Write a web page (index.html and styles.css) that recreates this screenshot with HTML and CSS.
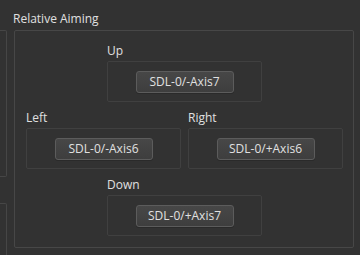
FILE: index.html
```html
<!DOCTYPE html>
<html lang="en">

<head>
    <meta charset="UTF-8">
    <title>Relative Aiming</title>
    <link rel="stylesheet" href="styles.css">
</head>

<body>
    <div class="page">
        <div class="side">
            <div class="side-box first"></div>
            <div class="side-box second"></div>
        </div>
        <div class="main">
            <div class="group-title">Relative Aiming</div>
            <div class="group">
                <div class="cell up">
                    <div class="label">Up</div>
                    <div class="box"><button class="bind">SDL-0/-Axis7</button></div>
                </div>
                <div class="cell">
                    <div class="label">Left</div>
                    <div class="box"><button class="bind">SDL-0/-Axis6</button></div>
                </div>
                <div class="cell">
                    <div class="label">Right</div>
                    <div class="box"><button class="bind">SDL-0/+Axis6</button></div>
                </div>
                <div class="cell down">
                    <div class="label">Down</div>
                    <div class="box"><button class="bind">SDL-0/+Axis7</button></div>
                </div>
            </div>
        </div>
    </div>
</body>

</html>
```

FILE: styles.css
```css
* {
    margin: 0;
    padding: 0;
    box-sizing: border-box;
}
html, body {
    height: 100%;
    overflow: hidden;
}
body {
    background: #323232;
    color: #e0e0e0;
    font: 12px/16px "Open Sans", "Noto Sans", sans-serif;
}
.page {
    display: flex;
    gap: 6px;
    height: 100%;
}
.side {
    width: 7px;
    height: 100%;
    overflow: hidden;
    display: flex;
    flex-direction: column;
    padding-top: 30px;
}
.side-box {
    flex-shrink: 0;
    border: 1px solid #464646;
    border-left: none;
    border-radius: 0 2px 2px 0;
}
.side-box.first {
    height: 147px;
}
.side-box.second {
    margin-top: 26px;
    height: 80px;
}
.main {
    width: 341px;
    padding-top: 11px;
}
.group-title {
    height: 16px;
    margin-bottom: 3px;
}
.group {
    margin-left: 1px;
    height: 218px;
    border: 1px solid #474747;
    border-radius: 2px;
    padding: 12px 11px 11px;
    display: grid;
    grid-template-columns: 155px 155px;
    column-gap: 7px;
    row-gap: 8px;
}
.cell.up,
.cell.down {
    grid-column: 1 / 3;
    justify-self: center;
    width: 155px;
}
.label {
    height: 16px;
    margin-bottom: 2px;
}
.box {
    height: 41px;
    border: 1px solid #404040;
    border-radius: 2px;
    display: flex;
    align-items: center;
    justify-content: center;
}
.bind {
    width: 98px;
    height: 22px;
    border: 1px solid #5c5c5c;
    border-radius: 3px;
    background: linear-gradient(#474747, #3e3e3e);
    color: #e0e0e0;
    font: 12px "Open Sans", "Noto Sans", sans-serif;
    box-shadow: 0 1px 0 #2a2a2a;
}
```
